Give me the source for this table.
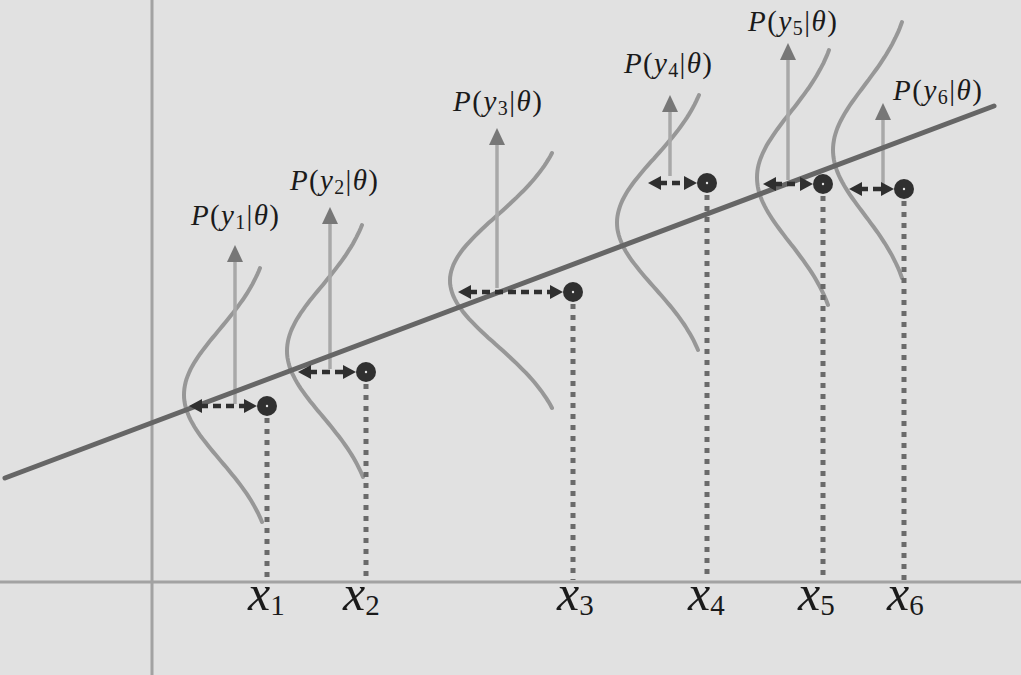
import React from "react";

// ── Data ──────────────────────────────────────────────────────────

type Sample = {
  px: number; py: number;            // observed point
  top: [number, number];             // top end of the gaussian
  bottom: [number, number];          // bottom end
  left: number;                      // x of the gaussian's peak
  arrowFrom: number;                 // left tip of the residual arrow
  upX: number; upTip: number; upFrom: number;
  label: { x: number; y: number; w: number; sub: string };
  xl: number;                        // left edge of the x_i label
};

const samples: Sample[] = [
  { px: 267, py: 406, top: [260, 268], bottom: [262, 522], left: 184, arrowFrom: 189, upX: 235, upTip: 245, upFrom: 404, label: { x: 191, y: 225, w: 88, sub: "1" }, xl: 248 },
  { px: 366, py: 372, top: [362, 225], bottom: [363, 477], left: 287, arrowFrom: 298, upX: 330, upTip: 207, upFrom: 369, label: { x: 290, y: 190, w: 88, sub: "2" }, xl: 343 },
  { px: 573, py: 292, top: [552, 153], bottom: [552, 408], left: 450, arrowFrom: 458, upX: 497, upTip: 128, upFrom: 288, label: { x: 453, y: 111, w: 89, sub: "3" }, xl: 557 },
  { px: 707, py: 183, top: [699, 95], bottom: [698, 350], left: 617, arrowFrom: 648, upX: 670, upTip: 95, upFrom: 176, label: { x: 624, y: 73, w: 88, sub: "4" }, xl: 688 },
  { px: 823, py: 184, top: [829, 50], bottom: [828, 305], left: 757, arrowFrom: 763, upX: 788, upTip: 43, upFrom: 180, label: { x: 748, y: 31, w: 89, sub: "5" }, xl: 798 },
  { px: 904, py: 189, top: [902, 22], bottom: [902, 278], left: 833, arrowFrom: 849, upX: 883, upTip: 103, upFrom: 184, label: { x: 893, y: 100, w: 89, sub: "6" }, xl: 887 },
];

const SERIF = "Liberation Serif";

// sideways gaussian: x = bx - A * exp(-(y-cy)^2 / 2s^2)
function gaussPath(s: Sample): string {
  const [xt, yt] = s.top;
  const [xb, yb] = s.bottom;
  const cy = (yt + yb) / 2;
  const h = (yb - yt) / 2;
  const sig = 65;
  const e = Math.exp(-(h * h) / (2 * sig * sig));
  const xEnd = (xt + xb) / 2;
  const A = (xEnd - s.left) / (1 - e);
  const bx = s.left + A;
  const pts: string[] = [];
  for (let i = 0; i <= 80; i++) {
    const y = yt + ((yb - yt) * i) / 80;
    const g = Math.exp(-((y - cy) ** 2) / (2 * sig * sig));
    const skew = ((xb - xt) * i) / 80;
    pts.push(`${(bx - A * g + skew - (xb - xt) / 2).toFixed(1)},${y.toFixed(1)}`);
  }
  return "M" + pts.join(" L");
}

// ── Component ─────────────────────────────────────────────────────

export default function App() {
  return (
    <div className="w-[1021px] h-[675px] bg-[#e1e1e1] overflow-hidden">
      <svg width={1021} height={675} viewBox="0 0 1021 675" className="block">
        {/* axes */}
        <line x1={152} y1={0} x2={152} y2={675} stroke="#a2a2a2" strokeWidth={3} />
        <line x1={0} y1={582} x2={1021} y2={582} stroke="#a2a2a2" strokeWidth={3} />

        {/* gaussians */}
        {samples.map((s) => (
          <path key={"g" + s.label.sub} d={gaussPath(s)} fill="none" stroke="#979797" strokeWidth={4} strokeLinecap="round" />
        ))}

        {/* probability arrows */}
        {samples.map((s) => (
          <g key={"u" + s.label.sub}>
            <line x1={s.upX} y1={s.upFrom} x2={s.upX} y2={s.upTip + 14} stroke="#a8a8a8" strokeWidth={3.5} />
            <polygon points={`${s.upX},${s.upTip} ${s.upX - 8},${s.upTip + 17} ${s.upX + 8},${s.upTip + 17}`} fill="#777777" />
          </g>
        ))}

        {/* regression line */}
        <line x1={5} y1={478} x2={994} y2={106} stroke="#666666" strokeWidth={5} strokeLinecap="round" />

        {/* drop lines */}
        {samples.map((s) => (
          <line key={"d" + s.label.sub} x1={s.px} y1={s.py + 12} x2={s.px} y2={580} stroke="#6a6a6a" strokeWidth={5} strokeDasharray="5 6" />
        ))}

        {/* residual arrows + points */}
        {samples.map((s) => {
          const a = s.arrowFrom;
          const b = s.px - 10;
          return (
            <g key={"r" + s.label.sub}>
              <line x1={a + 11} y1={s.py} x2={b - 11} y2={s.py} stroke="#2f2f2f" strokeWidth={4.5} strokeDasharray="8 5" />
              <polygon points={`${a},${s.py} ${a + 13},${s.py - 7} ${a + 13},${s.py + 7}`} fill="#2f2f2f" />
              <polygon points={`${b},${s.py} ${b - 13},${s.py - 7} ${b - 13},${s.py + 7}`} fill="#2f2f2f" />
              <circle cx={s.px} cy={s.py} r={10} fill="#303030" />
              <circle cx={s.px} cy={s.py} r={1.2} fill="#e6e6e6" />
            </g>
          );
        })}

        {/* P(y|θ) labels */}
        {samples.map((s) => (
          <text
            key={"l" + s.label.sub}
            x={s.label.x}
            y={s.label.y}
            fill="#1a1a1a"
            fontFamily={SERIF}
            fontSize={29}
            textLength={s.label.w}
            lengthAdjust="spacing"
          >
            <tspan fontStyle="italic">P</tspan>
            <tspan>(</tspan>
            <tspan fontStyle="italic">y</tspan>
            <tspan fontSize={20} dy={4}>{s.label.sub}</tspan>
            <tspan dy={-4}>|</tspan>
            <tspan fontStyle="italic">θ</tspan>
            <tspan>)</tspan>
          </text>
        ))}

        {/* x_i labels */}
        {samples.map((s) => (
          <text key={"x" + s.label.sub} x={s.xl} y={610} fill="#1a1a1a" fontFamily={SERIF} fontSize={50}>
            <tspan fontStyle="italic">x</tspan>
            <tspan fontSize={29} dy={5}>{s.label.sub}</tspan>
          </text>
        ))}
      </svg>
    </div>
  );
}
